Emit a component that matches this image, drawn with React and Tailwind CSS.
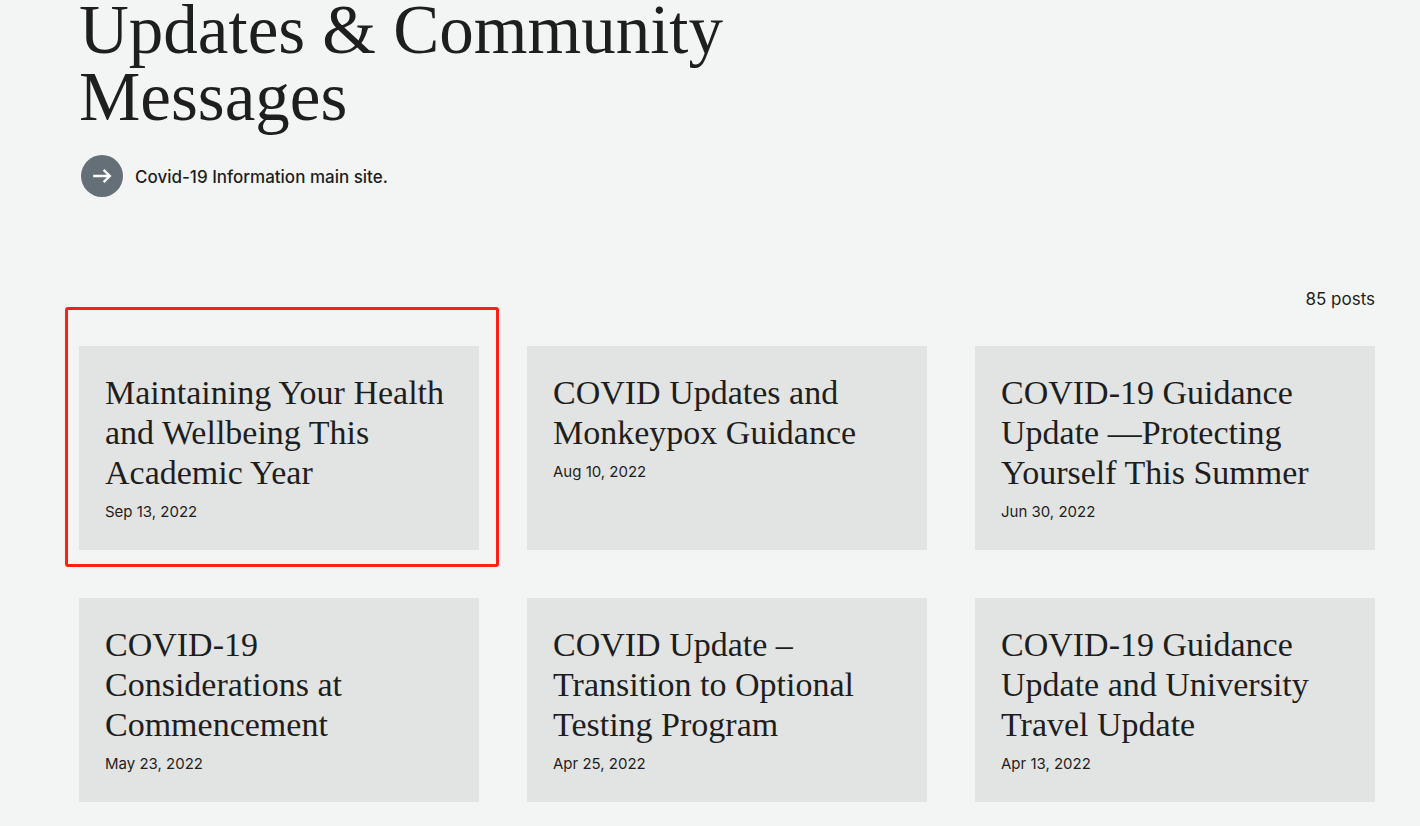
const posts = [
  { title: "Maintaining Your Health and Wellbeing This Academic Year", date: "Sep 13, 2022", marked: true },
  { title: "COVID Updates and Monkeypox Guidance", date: "Aug 10, 2022" },
  { title: "COVID-19 Guidance Update —Protecting Yourself This Summer", date: "Jun 30, 2022" },
  { title: "COVID-19 Considerations at Commencement", date: "May 23, 2022" },
  { title: "COVID Update – Transition to Optional Testing Program", date: "Apr 25, 2022" },
  { title: "COVID-19 Guidance Update and University Travel Update", date: "Apr 13, 2022" },
];

function ArrowIcon() {
  return (
    <svg aria-hidden="true" viewBox="0 0 42 42" className="size-[42px] shrink-0">
      <circle cx="21" cy="21" r="21" fill="#656f77" />
      <path d="M12.2 21H28.6M22.6 14.8L28.8 21L22.6 27.2" fill="none" stroke="#fff" strokeWidth="2.4" />
    </svg>
  );
}

function PostCard({ title, date, marked }) {
  return (
    <article className="relative bg-[#e2e4e3] px-[26px] pt-[27px] pb-[26px]">
      <h2 className="font-['Liberation_Serif',serif] text-[34px] leading-10">
        <a href="#post">{title}</a>
      </h2>
      <p className="mt-[7px] text-[15px] leading-6">{date}</p>
      {marked && (
        <div className="pointer-events-none absolute -top-[39px] -right-5 -bottom-[17px] -left-[14px] rounded-[3px] border-3 border-[#ff1f14]" />
      )}
    </article>
  );
}

export default function App() {
  return (
    <div className="flow-root min-h-screen bg-[#f3f5f4] font-['Inter',sans-serif] text-[#1e1e1e]">
      <main className="-mt-[3px] pr-[45px] pb-6 pl-[79px]">
        <h1 className="max-w-[700px] font-['Liberation_Serif',serif] text-[69px] leading-[67px]">
          Updates &amp; Community Messages
        </h1>
        <a href="#covid" className="mt-6 ml-0.5 inline-flex items-center gap-3 align-top text-[17px] leading-6 font-medium">
          <ArrowIcon />
          <span className="pt-0.5">Covid-19 Information main site.</span>
        </a>
        <p className="mt-[90px] text-right text-[17px] leading-6">85 posts</p>
        <div className="mt-[35px] grid grid-cols-3 gap-12">
          {posts.map((post) => (
            <PostCard key={post.title} {...post} />
          ))}
        </div>
      </main>
    </div>
  );
}
